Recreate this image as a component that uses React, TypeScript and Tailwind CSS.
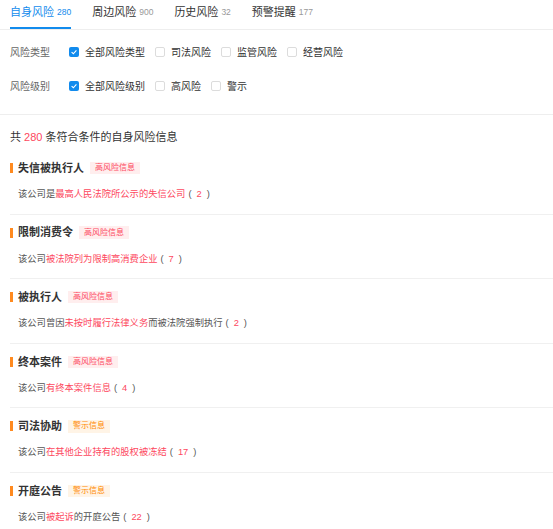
import React from 'react';

const FONT = '"Liberation Sans", "Noto Sans CJK SC", sans-serif';

const tabs = [
  { name: '自身风险', count: 280, active: true },
  { name: '周边风险', count: 900 },
  { name: '历史风险', count: 32 },
  { name: '预警提醒', count: 177 },
];

const filters = [
  { label: '风险类型', options: ['全部风险类型', '司法风险', '监管风险', '经营风险'] },
  { label: '风险级别', options: ['全部风险级别', '高风险', '警示'] },
];

type Item = {
  title: string;
  level: 'high' | 'warn';
  before: string;
  link: string;
  after: string;
  count: number;
};

const items: Item[] = [
  { title: '失信被执行人', level: 'high', before: '该公司是', link: '最高人民法院所公示的失信公司', after: '', count: 2 },
  { title: '限制消费令', level: 'high', before: '该公司', link: '被法院列为限制高消费企业', after: '', count: 7 },
  { title: '被执行人', level: 'high', before: '该公司曾因', link: '未按时履行法律义务', after: '而被法院强制执行', count: 2 },
  { title: '终本案件', level: 'high', before: '该公司', link: '有终本案件信息', after: '', count: 4 },
  { title: '司法协助', level: 'warn', before: '该公司', link: '在其他企业持有的股权被冻结', after: '', count: 17 },
  { title: '开庭公告', level: 'warn', before: '该公司', link: '被起诉', after: '的开庭公告', count: 22 },
];

const Checkbox: React.FC<{ checked?: boolean }> = ({ checked }) =>
  checked ? (
    <span className="flex h-[10px] w-[10px] items-center justify-center rounded-[2px] bg-[#128bed]">
      <svg viewBox="0 0 10 10" className="h-[8px] w-[8px]">
        <path d="M2 5.2 L4.2 7.2 L8 3" fill="none" stroke="#fff" strokeWidth="1.4" />
      </svg>
    </span>
  ) : (
    <span className="h-[10px] w-[10px] rounded-[2px] border border-[#dcdcdc] bg-white" />
  );

const App: React.FC = () => {
  return (
    <div className="min-h-screen bg-white text-[#333]" style={{ fontFamily: FONT }}>
      <div className="flex h-[30px] gap-[21px] border-b border-[#eee] pl-[10px]">
        {tabs.map((tab) => (
          <div
            key={tab.name}
            className={`flex h-[29px] items-start pt-[4px] ${tab.active ? 'border-b-2 border-[#128bed]' : ''}`}
          >
            <span className={`text-[11px] leading-[16px] ${tab.active ? 'text-[#128bed]' : 'text-[#333]'}`}>
              {tab.name}
            </span>
            <span className={`ml-[3px] text-[8.5px] leading-[16px] ${tab.active ? 'text-[#128bed]' : 'text-[#999]'}`}>
              {tab.count}
            </span>
          </div>
        ))}
      </div>

      <div className="flex flex-col gap-[14px] border-b border-[#eee] pt-[12px] pb-[18px] pl-[10px]">
        {filters.map((f) => (
          <div key={f.label} className="flex h-[20px] items-center text-[10px]">
            <span className="w-[59px] text-[#666]">{f.label}</span>
            {f.options.map((opt, i) => (
              <label key={opt} className="mr-[10px] flex items-center">
                <Checkbox checked={i === 0} />
                <span className="ml-[6px] text-[#333]">{opt}</span>
              </label>
            ))}
          </div>
        ))}
      </div>

      <div className="mt-[14px] mb-[5px] pl-[10px] text-[11px] leading-[16px] text-[#333]">
        共 <span className="text-[#fd485e]">280</span> 条符合条件的自身风险信息
      </div>

      <div className="pl-[10px]">
        {items.map((item) => (
          <div key={item.title} className="border-b border-[#f0f0f0] pt-[10px] pb-[10.6px]">
            <div className="flex h-[16px] items-center">
              <span className="h-[10px] w-[3px] bg-[#ff8a1f]" />
              <span className="ml-[5px] text-[11px] font-bold text-[#333]">{item.title}</span>
              <span
                className={`ml-[6px] flex h-[12.5px] items-center px-[5px] text-[8px] ${
                  item.level === 'high' ? 'bg-[#ffeeee] text-[#fd485e]' : 'bg-[#fff4e6] text-[#ff8900]'
                }`}
              >
                {item.level === 'high' ? '高风险信息' : '警示信息'}
              </span>
            </div>
            <div className="mt-[11px] flex h-[16px] items-center pl-[8px] text-[9.3px] text-[#555]">
              <span>{item.before}</span>
              <span className="text-[#fd485e]">{item.link}</span>
              <span>{item.after}</span>
              <span className="ml-[3px]">(</span>
              <span className="mx-[5px] text-[#fd485e]">{item.count}</span>
              <span>)</span>
            </div>
          </div>
        ))}
      </div>
    </div>
  );
};

export default App;
